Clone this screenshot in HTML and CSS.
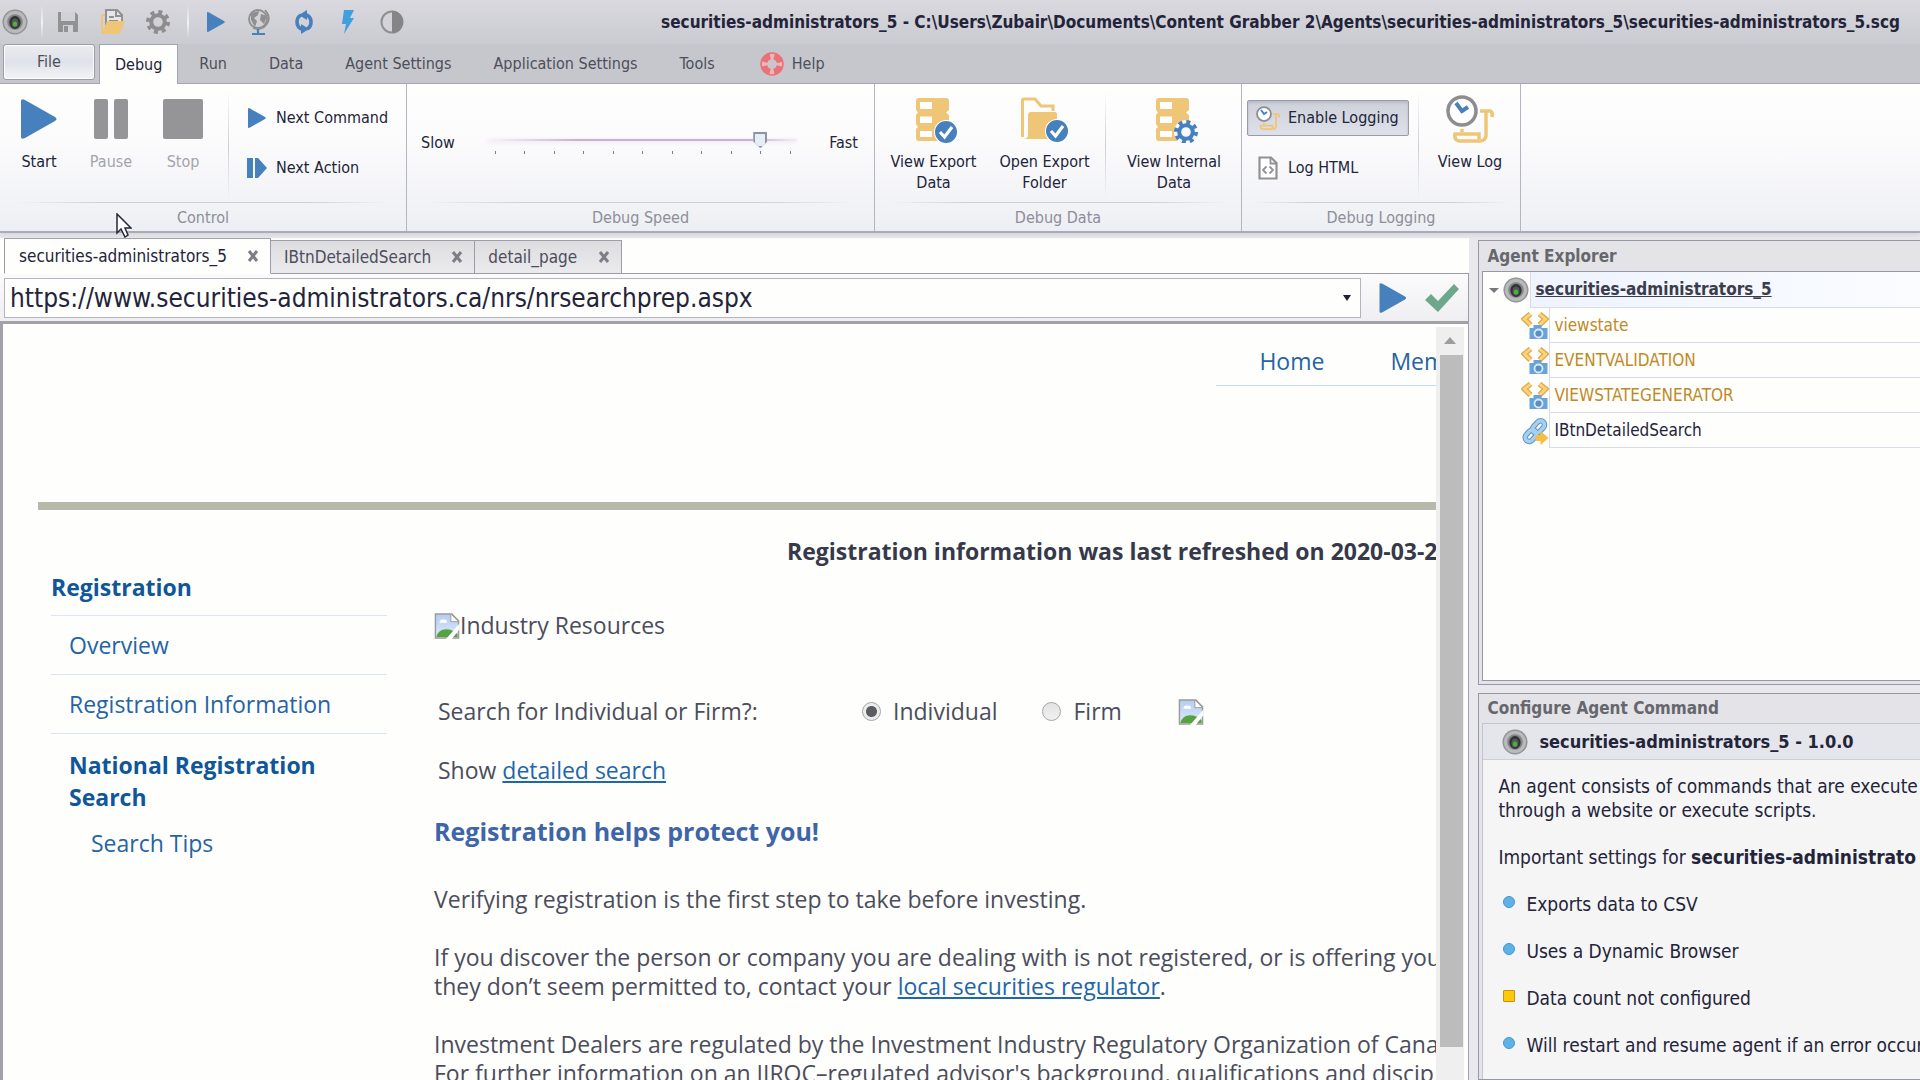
FILE: index.html
```html
<!DOCTYPE html>
<html lang="en">
<head>
<meta charset="utf-8">
<title>Content Grabber - securities-administrators_5</title>
<link rel="stylesheet" href="styles.css">
</head>
<body>
<svg class="defs" aria-hidden="true">
  <defs>
    <radialGradient id="lens-rim"><stop offset="0.4" stop-color="#6d6e70"/><stop offset="0.75" stop-color="#a9aaac"/><stop offset="1" stop-color="#8b8c8e"/></radialGradient>
    <linearGradient id="sky" x1="0" y1="0" x2="0" y2="1"><stop offset="0" stop-color="#b5cdf0"/><stop offset="1" stop-color="#dce9fb"/></linearGradient>
    <symbol id="lens" viewBox="0 0 26 26"><circle cx="13" cy="13" r="12.5" fill="url(#lens-rim)"/><circle cx="13" cy="13" r="9.5" fill="none" stroke="#b9babc" stroke-width="3"/><ellipse cx="13" cy="13.5" rx="5.5" ry="6.5" fill="#2f3133"/><ellipse cx="13" cy="14" rx="3.5" ry="4.5" fill="#55585a"/><ellipse cx="13" cy="15" rx="2.2" ry="2.6" fill="#49b53a"/></symbol>
    <symbol id="play" viewBox="0 0 36 40"><path d="M0 2Q0-1 4 1L34 18Q37 20 34 22L4 39Q0 41 0 38Z" fill="#4680bd"/></symbol>
    <symbol id="database" viewBox="0 0 44 46"><path d="M3 0H30Q33 0 33 3V12L30 14.500L33 17V26L30 29L33 31V40Q33 43 30 43H3Q0 43 0 40V31L2 29L0 26V17L2 14.500L0 12V3Q0 0 3 0Z" fill="#efc577"/><path d="M4 4H16V11H4ZM4 18.500H16V25H4ZM4 33H16V39H4Z" fill="#fff"/></symbol>
    <symbol id="tick" viewBox="0 0 24 24"><circle cx="12" cy="12" r="12" fill="#fff"/><circle cx="12" cy="12" r="11" fill="#4680bd"/><path d="M6 12L10.500 17L18 7" fill="none" stroke="#fff" stroke-width="3.200"/></symbol>
    <symbol id="cog" viewBox="0 0 24 24"><circle cx="12" cy="12" r="6.800" fill="none" stroke="currentColor" stroke-width="4"/><circle cx="12" cy="12" r="10" fill="none" stroke="currentColor" stroke-width="4" stroke-dasharray="3.927 3.927"/></symbol>
    <symbol id="log" viewBox="0 0 48 48"><path d="M34 16H44Q47 17 46 22M40 17V41Q39 46 34 46H13Q8 45 9 39H33V44M16 34V37" fill="none" stroke="#efc577" stroke-width="3.500"/><circle cx="16" cy="16" r="14" fill="#fff" stroke="#8d8d8f" stroke-width="3.500"/><path d="M10 8L16 16L22 12" fill="none" stroke="#4680bd" stroke-width="4"/></symbol>
    <symbol id="html-file" viewBox="0 0 20 24"><path d="M1.500 1.500H13L18.500 7V22.500H1.500Z" fill="#fff" stroke="#919193" stroke-width="2.200"/><path d="M12.500 1.500V7.500H18.500M8.500 10.500L5 14L8.500 17.500M11.500 10.500L15 14L11.500 17.500" fill="none" stroke="#919193" stroke-width="1.800"/></symbol>
    <symbol id="broken" viewBox="0 0 26 27"><path d="M1 1H18L25 8V26H1Z" fill="url(#sky)" stroke="#9b9b9d" stroke-width="1.500"/><path d="M17 1V9H25Z" fill="#fff" stroke="#9b9b9d"/><path d="M5 10Q6 6 9 7Q13 6 13 10Z" fill="#fff"/><path d="M2 25Q4 17 12 17Q19 17 24 22V25Z" fill="#55a33f"/><path d="M26 11V17L18 27H12Z" fill="#fefefd"/></symbol>
    <symbol id="capture" viewBox="0 0 27 28"><path d="M9 2L3 7L9 13M18 2L24 7L18 13" fill="none" stroke="#e5aa46" stroke-width="5.500"/><path d="M9 2L3 7L9 13M18 2L24 7L18 13" fill="none" stroke="#ffd27e" stroke-width="2.800"/><path d="M8 16H12V13H20V16H26V27H8Z" fill="#69a4d9"/><circle cx="17" cy="21.500" r="4" fill="#5c8fc0" stroke="#d6eafc" stroke-width="1.800"/></symbol>
    <symbol id="link" viewBox="0 0 27 28"><g fill="none" stroke="#5b94c5" stroke-width="5.500"><rect x="13" y="3" width="8" height="14" rx="4" transform="rotate(42 17 10)"/><rect x="5" y="12" width="8" height="13" rx="4" transform="rotate(42 9 19)"/></g><g fill="none" stroke="#a6d0f1" stroke-width="3.500"><rect x="13" y="3" width="8" height="14" rx="4" transform="rotate(42 17 10)"/><rect x="5" y="12" width="8" height="13" rx="4" transform="rotate(42 9 19)"/></g><path d="M14 18H19V14L27 21L19 28V24H14Z" fill="#f6bd42"/></symbol>
  </defs>
</svg>

<div class="app">
  <header class="titlebar">
    <div class="quick">
      <svg class="i26"><use href="#lens"/></svg>
      <span class="quick-sep"></span>
      <button aria-label="Save"><svg class="i24" viewBox="0 0 24 24"><path d="M2 2H19L22 5V22H2Z" fill="#929295"/><path d="M5 2H19V11H5Z" fill="#d1d2d7"/><path d="M7 15H17V22H7Z" fill="#d1d2d7"/><path d="M8 16H12V22H8Z" fill="#929295"/></svg></button>
      <button aria-label="Open"><svg class="i26" viewBox="0 0 26 26"><path d="M6 16V1H17L22 6V12" fill="#e6e6e9" stroke="#919194" stroke-width="2"/><path d="M16 1V7H22M9 8H14M9 12H18" fill="none" stroke="#919194" stroke-width="2"/><path d="M2 25V6H5" fill="none" stroke="#efc577" stroke-width="2"/><path d="M7 12H25L20 25H2Z" fill="#efc577"/></svg></button>
      <button aria-label="Settings" class="gray"><svg class="i24"><use href="#cog"/></svg></button>
      <span class="quick-sep run-sep"></span>
      <button aria-label="Start"><svg class="i20"><use href="#play"/></svg></button>
      <button aria-label="Browser"><svg class="i26" viewBox="0 0 26 26"><circle cx="12" cy="10" r="9" fill="#d1d2d7" stroke="#8f8f92" stroke-width="1.800"/><path d="M5 4L13 2L12 6L8 9L11 12L9 18L5 11ZM15 5L21 7L18 15L14 11Z" fill="#8f8f92"/><path d="M19 1Q27 10 18 18Q14 21 7 19" fill="none" stroke="#8f8f92" stroke-width="1.800"/><path d="M12 20V24M6 25H19" stroke="#4680bd" stroke-width="2.200"/></svg></button>
      <button aria-label="Refresh"><svg class="i24" viewBox="0 0 24 24"><path d="M13 4.500Q19 6 19 12Q19 17 15 19M11 19.500Q5 18 5 12Q5 7 9 5" fill="none" stroke="#4680bd" stroke-width="3.600"/><path d="M15 0L7 5L15 10ZM9 24L17 19L9 14Z" fill="#4680bd"/></svg></button>
      <button aria-label="Activate"><svg class="i24" viewBox="0 0 24 24"><path d="M8 0H18L14 8H18L8 24L10 14H6Z" fill="#409fdd"/></svg></button>
      <button aria-label="Contrast"><svg class="i24" viewBox="0 0 24 24"><circle cx="12" cy="12" r="10.500" fill="#d4d4d8" stroke="#8f8f92" stroke-width="2"/><path d="M12 1A11 11 0 0 1 12 23Z" fill="#858588"/></svg></button>
    </div>
    <h1 class="title">securities-administrators_5 - C:\Users\Zubair\Documents\Content Grabber 2\Agents\securities-administrators_5\securities-administrators_5.scg</h1>
  </header>

  <nav class="menu">
    <button class="file">File</button>
    <button class="active">Debug</button>
    <button>Run</button>
    <button>Data</button>
    <button>Agent Settings</button>
    <button>Application Settings</button>
    <button>Tools</button>
    <button class="help"><svg class="i24" viewBox="0 0 24 24"><circle cx="12" cy="12" r="8" fill="none" stroke="#f1b5b8" stroke-width="7"/><circle cx="12" cy="12" r="8" fill="none" stroke="#e57379" stroke-width="6" stroke-dasharray="8.500 4.066" stroke-dashoffset="-2"/><circle cx="12" cy="12" r="11" fill="none" stroke="#e57379" stroke-width="1.500"/></svg>Help</button>
  </nav>

  <section class="ribbon">
    <div class="group control">
      <div class="tools">
        <button class="big"><svg class="art" viewBox="0 0 48 48"><use href="#play" x="6" y="4" width="36" height="40"/></svg>Start</button>
        <button class="big" disabled><svg class="art" viewBox="0 0 48 48"><rect x="7" y="4" width="14" height="40" rx="2" fill="#959597"/><rect x="27" y="4" width="14" height="40" rx="2" fill="#959597"/></svg>Pause</button>
        <button class="big" disabled><svg class="art" viewBox="0 0 48 48"><rect x="4" y="4" width="40" height="40" rx="2" fill="#959597"/></svg>Stop</button>
        <span class="sep"></span>
        <div class="stack">
          <button class="row"><svg class="i20"><use href="#play"/></svg>Next Command</button>
          <button class="row"><svg class="i20" viewBox="0 0 20 20"><path d="M0 0H6V20H0ZM8 0H11L20 10L11 20H8Z" fill="#4680bd"/></svg>Next Action</button>
        </div>
      </div>
      <div class="caption">Control</div>
    </div>
    <div class="group speed">
      <div class="tools">
        <label for="speed">Slow</label>
        <div class="slider">
          <input id="speed" type="range" min="0" max="10" step="1" value="9">
          <div class="ticks"><i></i><i></i><i></i><i></i><i></i><i></i><i></i><i></i><i></i><i></i><i></i></div>
        </div>
        <span>Fast</span>
      </div>
      <div class="caption">Debug Speed</div>
    </div>
    <div class="group data">
      <div class="tools">
        <button class="big wide"><svg class="art" viewBox="0 0 48 48"><use href="#database" x="6" y="3" width="44" height="46"/><use href="#tick" x="24" y="25" width="24" height="24"/></svg>View Export Data</button>
        <button class="big wide"><svg class="art" viewBox="0 0 48 48"><path d="M1.500 42V5Q1.500 4 3 4H14L20 11H32V16" fill="none" stroke="#efc577" stroke-width="3"/><path d="M7 20Q7 17 10 17H34Q36 17 36 19V44H2Q7 44 7 40Z" fill="#efc577"/><use href="#tick" x="24" y="24" width="24" height="24"/></svg>Open Export Folder</button>
        <span class="sep"></span>
        <button class="big wider"><svg class="art" viewBox="0 0 48 48"><use href="#database" x="6" y="3" width="44" height="46"/><circle cx="36" cy="37" r="12" fill="#fafafc"/><use href="#cog" x="24" y="25" width="24" height="24"/></svg>View Internal<br>Data</button>
      </div>
      <div class="caption">Debug Data</div>
    </div>
    <div class="group logging">
      <div class="tools">
        <div class="stack">
          <button class="row pressed"><svg class="i24"><use href="#log"/></svg>Enable Logging</button>
          <button class="row"><svg class="i24"><use href="#html-file"/></svg>Log HTML</button>
        </div>
        <span class="sep"></span>
        <button class="big"><svg class="art"><use href="#log"/></svg>View Log</button>
      </div>
      <div class="caption">Debug Logging</div>
    </div>
  </section>

  <main class="work">
    <section class="browser">
      <div class="tabs">
        <div class="tab current"><span>securities-administrators_5</span><button aria-label="Close tab"><svg class="i12" viewBox="0 0 12 12"><path d="M2 1L10 11M10 1L2 11"/></svg></button></div>
        <div class="tab"><span>IBtnDetailedSearch</span><button aria-label="Close tab"><svg class="i12" viewBox="0 0 12 12"><path d="M2 1L10 11M10 1L2 11"/></svg></button></div>
        <div class="tab"><span>detail_page</span><button aria-label="Close tab"><svg class="i12" viewBox="0 0 12 12"><path d="M2 1L10 11M10 1L2 11"/></svg></button></div>
        <div class="tab-fill"></div>
      </div>
      <div class="address">
        <div class="combo">
          <input type="text" aria-label="Address" value="https://www.securities-administrators.ca/nrs/nrsearchprep.aspx">
          <button aria-label="Address history"><svg class="i10" viewBox="0 0 10 10"><path d="M1 2H9L5 8Z" fill="#1f2133"/></svg></button>
        </div>
        <button aria-label="Go"><svg class="i32" viewBox="0 0 32 32"><use href="#play" x="2" y="1" width="28" height="30"/></svg></button>
        <button aria-label="Accept"><svg class="i34" viewBox="0 0 34 30"><path d="M0 17L6 11L13 18L29 1L34 6L13 29Z" fill="#6fa78c"/></svg></button>
      </div>
      <div class="view">
        <div class="site">
          <nav class="site-nav"><a href="#home">Home</a><a href="#members">Mem</a></nav>
          <div class="site-cols">
            <aside class="side">
              <h2><a href="#registration">Registration</a></h2>
              <a href="#overview">Overview</a>
              <a href="#information">Registration Information</a>
              <a class="here" href="#search">National Registration Search</a>
              <a class="sub" href="#tips">Search Tips</a>
            </aside>
            <article class="article">
              <p class="refreshed">Registration information was last refreshed on 2020-03-2</p>
              <p class="resources"><svg class="i26"><use href="#broken"/></svg>Industry Resources</p>
              <form class="search">
                <span class="question">Search for Individual or Firm?:</span>
                <label><input type="radio" name="kind" checked>Individual</label>
                <label><input type="radio" name="kind">Firm</label>
                <svg class="i26 find"><use href="#broken"/></svg>
              </form>
              <p class="show">Show <a href="#detailed">detailed search</a></p>
              <h3>Registration helps protect you!</h3>
              <p>Verifying registration is the first step to take before investing.</p>
              <p>If you discover the person or company you are dealing with is not registered, or is offering you<br>they don’t seem permitted to, contact your <a href="#regulator">local securities regulator</a>.</p>
              <p>Investment Dealers are regulated by the Investment Industry Regulatory Organization of Cana<br>For further information on an IIROC–regulated advisor's background, qualifications and discip</p>
            </article>
          </div>
        </div>
        <div class="scrollbar">
          <button aria-label="Scroll up"><svg class="i12" viewBox="0 0 12 12"><path d="M6 2L12 9H0Z" fill="#9d9d9d"/></svg></button>
          <div class="track"><div class="thumb"></div></div>
        </div>
      </div>
    </section>

    <aside class="panels">
      <section class="panel explorer">
        <h2>Agent Explorer</h2>
        <div class="tree">
          <div class="node root"><svg class="i10" viewBox="0 0 10 10"><path d="M0 3H10L5 8Z" fill="#77787c"/></svg><svg class="i26"><use href="#lens"/></svg><span>securities-administrators_5</span></div>
          <div class="node capture"><svg class="i28"><use href="#capture"/></svg><span>viewstate</span></div>
          <div class="node capture"><svg class="i28"><use href="#capture"/></svg><span>EVENTVALIDATION</span></div>
          <div class="node capture"><svg class="i28"><use href="#capture"/></svg><span>VIEWSTATEGENERATOR</span></div>
          <div class="node"><svg class="i28"><use href="#link"/></svg><span>IBtnDetailedSearch</span></div>
        </div>
      </section>
      <section class="panel configure">
        <h2>Configure Agent Command</h2>
        <div class="card">
          <h3><svg class="i26"><use href="#lens"/></svg>securities-administrators_5 - 1.0.0</h3>
          <div class="info">
            <p>An agent consists of commands that are execute<br>through a website or execute scripts.</p>
            <p>Important settings for <b>securities-administrato</b></p>
            <ul>
              <li>Exports data to CSV</li>
              <li>Uses a Dynamic Browser</li>
              <li class="warn">Data count not configured</li>
              <li>Will restart and resume agent if an error occur</li>
            </ul>
          </div>
        </div>
      </section>
    </aside>
  </main>
  <svg class="cursor" viewBox="0 0 16 25"><path d="M1 1V20L5 16L9 24L12 22L9 15H15Z" fill="#fff" stroke="#25263a" stroke-width="1.500"/></svg>
</div>
</body>
</html>
```
FILE: styles.css
```css
* { box-sizing: border-box; margin: 0; padding: 0; }
body { font: 16px/20px "DejaVu Sans Condensed", "Open Sans", sans-serif; color: #23243a; background: #fefefd; }
button, input { font: inherit; color: inherit; background: none; border: 0; }
button { display: flex; align-items: center; white-space: nowrap; }
svg { display: block; flex: none; }
.defs { position: absolute; width: 0; height: 0; }
.i10 { width: 10px; height: 10px; }
.i12 { width: 12px; height: 12px; }
.i20 { width: 20px; height: 20px; }
.i24 { width: 24px; height: 24px; }
.i26 { width: 26px; height: 26px; }
.i28 { width: 28px; height: 28px; }
.i32 { width: 32px; height: 32px; }
.i34 { width: 34px; height: 30px; }

.app { height: 100vh; display: flex; flex-direction: column; overflow: hidden; }

/* Title bar */
.titlebar { display: flex; align-items: center; justify-content: space-between; height: 44px; padding: 0 20px 0 2px; background: linear-gradient(#d9d9df, #cacbd0); white-space: nowrap; }
.quick { display: flex; align-items: center; gap: 20px; }
.quick .gray { color: #8d8d90; }
.quick-sep { width: 2px; height: 34px; margin: 0 -7px; background: linear-gradient(transparent, #f2f2f5, transparent); }
.run-sep { margin: 0 -3px; }
.title { font-size: 17px; line-height: 20px; }

/* Menu */
.menu { display: flex; height: 40px; background: #c6c7cc; border-bottom: 1px solid #a3a4b0; color: #4d4e5a; }
.menu button { padding: 0 21px; }
.menu .file { width: 92px; height: 36px; margin: 0 4px 0 3px; justify-content: center; border: 1px solid #9c9da8; border-radius: 3px; background: linear-gradient(#ebecf0, #dfe2ea 50%, #f3f4f7); box-shadow: inset 0 0 0 1px #fbfbfd; }
.menu .active { height: 40px; padding: 0 15px; background: #fefefd; border: 1px solid #a3a4b0; border-bottom: 0; color: #23243a; }
.menu .help { gap: 8px; padding-left: 24px; }

/* Ribbon */
.ribbon { display: flex; height: 149px; background: linear-gradient(#fefefd, #fbfbfc 40%, #eeeff4); border-bottom: 2px solid #a9aab5; box-shadow: 0 3px 4px #d8d8dd; z-index: 1; flex: none; }
.group { display: flex; flex-direction: column; border-right: 1px solid #b4b5c1; }
.control { width: 407px; }
.speed { width: 468px; }
.data { width: 367px; }
.logging { width: 279px; }
.tools { flex: 1; display: flex; padding: 7px 3px 0; }
.caption { height: 29px; line-height: 30px; text-align: center; color: #8d8e99; border-top: 1px solid; border-image: linear-gradient(90deg, transparent 4%, #ccd0dc 25%, #ccd0dc 75%, transparent 96%) 1; }
.big { width: 72px; flex-direction: column; justify-content: flex-start; gap: 8px; line-height: 21px; text-align: center; white-space: normal; padding-top: 4px; }
.big.wide { width: 111px; }
.big.wider { width: 126px; }
.big:disabled { color: #a3a4ab; }
.art { width: 48px; height: 48px; color: #4680bd; }
.sep { width: 1px; height: 110px; margin: 0 5px; background: linear-gradient(transparent, #cdced8, transparent); }
.stack { display: flex; flex-direction: column; gap: 14px; padding-top: 9px; }
.row { height: 36px; padding: 0 9px; gap: 8px; }
.control .sep { margin: 0 6px 0 9px; }
.control .row { padding: 0 12px; gap: 9px; }
.pressed { border: 1px solid #9a9ba8; border-radius: 2px; padding: 0 8px; background: linear-gradient(#ced1da, #dfe1e9); box-shadow: inset 0 2px 3px #b9bcc8; }
.logging .tools { padding-left: 5px; }
.logging .stack { width: 162px; }
.logging .sep { margin: 0 9px; }
.logging .big { width: 84px; }
.speed .tools { align-items: center; justify-content: space-between; padding: 0 16px 0 14px; }
.slider { width: 310px; }
.slider input { display: block; appearance: none; width: 100%; height: 16px; }
.slider input::-webkit-slider-runnable-track { height: 2px; background: linear-gradient(90deg, #f8f6f9, #c4b3cc 30%, #c4b3cc 85%, #f0eef3); box-shadow: 0 1px 4px #ecd9ee; }
.slider input::-webkit-slider-thumb { appearance: none; width: 14px; height: 16px; margin-top: -7px; background: #8c94a4; clip-path: polygon(0 0, 100% 0, 100% 60%, 50% 100%, 0 60%); box-shadow: inset 0 0 0 2px #8c94a4, inset 0 0 0 12px #e5edf5; }
.ticks { display: flex; justify-content: space-between; padding: 3px 6px 0 8px; }
.ticks i { width: 1px; height: 3px; background: #7d7e8b; }

/* Work area */
.work { flex: 1; min-height: 0; display: grid; grid-template-columns: minmax(0, 1fr) 23%; gap: 9px; padding-top: 5px; background: #e9e9ed; }
.browser { display: flex; flex-direction: column; min-height: 0; background: #fefefd; }
.tabs { display: flex; align-items: flex-end; height: 36px; padding-left: 4px; flex: none; }
.tab { display: flex; align-items: center; justify-content: space-between; height: 34px; padding: 0 11px 0 13px; border: 1px solid #9b9ca8; border-left: 0; background: linear-gradient(#dddde0, #ebebee); color: #4d4e5a; min-width: 147px; gap: 20px; font-size: 17px; }
.tab.current { height: 36px; padding-left: 14px; border-left: 1px solid #9b9ca8; border-bottom-color: #fefefd; background: #fefefd; color: #23243a; }
.tab path { stroke: #7c7d85; stroke-width: 3; }
.tab-fill { flex: 1; border-bottom: 1px solid #9b9ca8; }
.address { display: flex; align-items: center; height: 50px; padding: 0 9px 0 4px; gap: 16px; flex: none; background: linear-gradient(#fbfbfc, #efeff1); border-right: 1px solid #9b9ca8; border-bottom: 3px solid #a1a1a6; }
.combo { flex: 1; display: flex; align-items: center; height: 40px; border: 1px solid #b3b4bf; background: #fefefd; padding: 0 8px 0 5px; }
.combo input { flex: 1; font-size: 26px; height: 36px; outline: 0; }
.view { flex: 1; min-height: 0; display: flex; border: solid #a1a1ac; border-width: 0 1px 0 3px; padding: 3px 4px 0 0; }
.scrollbar { width: 28px; display: flex; flex-direction: column; background: #efefef; }
.scrollbar button { height: 28px; justify-content: center; }
.track { flex: 1; padding: 0 1px 0 4px; }
.thumb { height: 95.5%; background: #bcbcbc; }

/* Site shown in the browser */
.site { flex: 1; min-width: 0; overflow: hidden; font: 23px/29px "Open Sans", sans-serif; color: #4b4d5c; white-space: nowrap; padding-left: 35px; }
.site a { color: #2464a5; text-decoration: none; }
.site-nav { display: flex; gap: 66px; width: 220px; height: 59px; margin-left: auto; padding: 20px 0 0 43px; border-bottom: 1px solid #c7d9ee; }
.site-cols { display: flex; gap: 47px; margin-top: 116px; padding-left: 13px; border-top: 8px solid #b7baab; }
.side { width: 336px; flex: none; padding-top: 62px; }
.side h2 { font-size: 23px; line-height: 30px; padding-bottom: 13px; }
.side h2 a, .side .here { color: #0f5799; font-weight: 700; }
.side > a { display: block; padding: 15px 18px 14px; border-top: 1px solid #dce6f3; }
.side > .here { white-space: normal; line-height: 32px; padding-bottom: 16px; }
.side > .sub { border: 0; padding: 0 40px; }
.article { min-width: 0; padding-top: 27px; }
.article p { margin-bottom: 29px; }
.article p a { color: #1f66aa; text-decoration: underline; }
.article .refreshed { padding-left: 353px; font-weight: 700; color: #35394a; margin-bottom: 45px; }
.article .resources { display: flex; align-items: center; margin-bottom: 57px; }
.search { display: flex; align-items: center; padding-left: 4px; margin-bottom: 30px; }
.search label { display: flex; align-items: center; gap: 12px; margin-right: 45px; }
.search input { appearance: none; width: 19px; height: 19px; border: 1px solid #a5a5a8; border-radius: 50%; background: linear-gradient(#e2e2e2, #f1f1f1); }
.search input:checked { background: radial-gradient(circle, #5b5c60 0 5px, #ececec 6px); }
.find { margin-left: 11px; }
.question { width: 424px; }
.article .show { padding-left: 4px; margin-bottom: 32px; }
.article h3 { font-size: 25px; line-height: 29px; color: #3d65a8; margin-bottom: 39px; }

/* Side panels */
.panels { display: flex; flex-direction: column; gap: 8px; min-width: 0; min-height: 0; white-space: nowrap; padding-top: 2px; }
.panel { border: 1px solid #9697a5; border-right: 0; overflow: hidden; display: flex; flex-direction: column; padding-left: 3px; background: #e3e3e8; }
.panel h2 { font-size: 17px; line-height: 30px; padding-left: 5px; color: #66676c; }
.explorer { height: 445px; flex: none; padding-bottom: 3px; }
.tree { flex: 1; background: #fefefd; border: 1px solid #9697a5; border-right: 0; font-size: 17px; }
.node { display: flex; align-items: center; height: 35px; line-height: 34px; padding-left: 38px; }
.node span { flex: 1; align-self: stretch; padding-left: 4px; border: solid #dadbe8; border-width: 0 0 1px 1px; }
.root { height: 36px; padding-left: 6px; gap: 4px; font-weight: 700; color: #3b3c4c; text-decoration: underline; }
.root span { margin-left: -3px; background: linear-gradient(90deg, #eef3fd, #fafcff); }
.capture span { color: #bf8a26; }
.configure { flex: 1; min-height: 0; }
.configure h2 { line-height: 29px; }
.card { flex: 1; background: #f5f5f6; border: solid #c3c4cf; border-width: 1px 0 0 1px; }
.card h3 { display: flex; align-items: center; gap: 11px; height: 36px; padding-left: 19px; font-size: 18px; background: #e5e6eb; border-bottom: 1px solid #cdced8; }
.info { padding: 14px 15px; font-size: 19px; line-height: 24px; }
.info p { margin-bottom: 23px; }
.info ul { list-style: none; }
.info li { display: flex; align-items: center; gap: 11px; margin: 0 5px 23px; }
.info li::before { content: ""; flex: none; width: 10px; height: 10px; margin-top: -4px; border-radius: 50%; background: #5eb2e8; border: 1px solid #4496cd; }
.info .warn::before { border-radius: 1px; background: #ffc907; border-color: #c89116; }

.cursor { position: absolute; left: 116px; top: 213px; width: 16px; height: 25px; z-index: 2; }
```
